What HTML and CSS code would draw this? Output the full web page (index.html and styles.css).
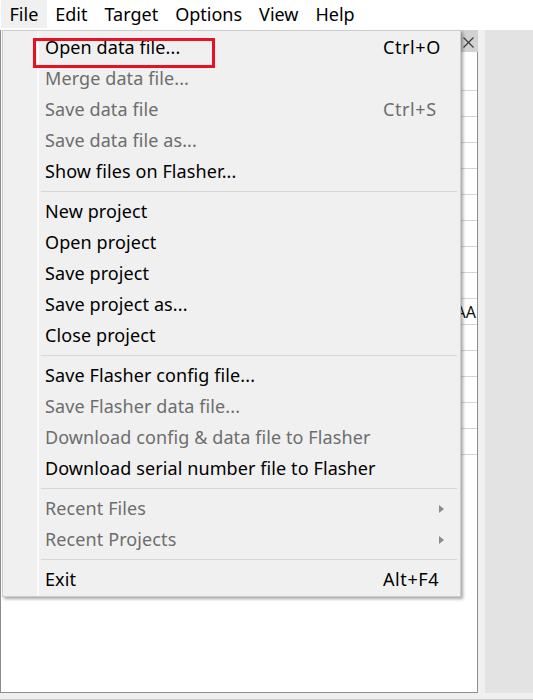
FILE: index.html
```html
<!DOCTYPE html>
<html>
<head>
<meta charset="utf-8">
<link rel="stylesheet" href="styles.css">
</head>
<body>
<div class="screen">
  <div class="menubar">
    <span class="mb-item active">File</span>
    <span class="mb-item">Edit</span>
    <span class="mb-item">Target</span>
    <span class="mb-item">Options</span>
    <span class="mb-item">View</span>
    <span class="mb-item">Help</span>
  </div>
  <div class="workspace">
    <div class="panel">
      <div class="panel-main"></div>
      <div class="panel-col">
        <div class="close">
          <svg width="16" height="22" viewBox="0 0 16 22"><path d="M2.5 7.5 L12.5 17.5 M12.5 7.5 L2.5 17.5" stroke="#3a3a3a" stroke-width="1.2" fill="none"/></svg>
        </div>
        <div class="col-head"></div>
        <div class="rows">
          <div class="cell"></div><div class="cell"></div><div class="cell"></div><div class="cell"></div>
          <div class="cell"></div><div class="cell"></div><div class="cell"></div><div class="cell"></div>
          <div class="cell"><span class="cell-text">AA</span></div>
          <div class="cell"></div><div class="cell"></div><div class="cell"></div><div class="cell"></div>
          <div class="cell"></div>
        </div>
      </div>
    </div>
    <div class="gap"></div>
    <div class="side"></div>
  </div>
  <div class="statusbar"></div>

  <div class="popup">
    <div class="item"><span class="label">Open data file...</span><span class="key">Ctrl+O</span></div>
    <div class="item disabled"><span class="label">Merge data file...</span><span class="key"></span></div>
    <div class="item disabled"><span class="label">Save data file</span><span class="key">Ctrl+S</span></div>
    <div class="item disabled"><span class="label">Save data file as...</span><span class="key"></span></div>
    <div class="item"><span class="label">Show files on Flasher...</span><span class="key"></span></div>
    <div class="sep"></div>
    <div class="item"><span class="label">New project</span><span class="key"></span></div>
    <div class="item"><span class="label">Open project</span><span class="key"></span></div>
    <div class="item"><span class="label">Save project</span><span class="key"></span></div>
    <div class="item"><span class="label">Save project as...</span><span class="key"></span></div>
    <div class="item"><span class="label">Close project</span><span class="key"></span></div>
    <div class="sep"></div>
    <div class="item"><span class="label">Save Flasher config file...</span><span class="key"></span></div>
    <div class="item disabled"><span class="label">Save Flasher data file...</span><span class="key"></span></div>
    <div class="item disabled"><span class="label">Download config &amp; data file to Flasher</span><span class="key"></span></div>
    <div class="item"><span class="label">Download serial number file to Flasher</span><span class="key"></span></div>
    <div class="sep"></div>
    <div class="item disabled"><span class="label">Recent Files</span><span class="key"><span class="arrow"></span></span></div>
    <div class="item disabled"><span class="label">Recent Projects</span><span class="key"><span class="arrow"></span></span></div>
    <div class="sep"></div>
    <div class="item"><span class="label">Exit</span><span class="key">Alt+F4</span></div>
  </div>
  <div class="highlight"></div>
</div>
</body>
</html>
```

FILE: styles.css
```css
html, body {
  margin: 0;
  padding: 0;
  background: #ffffff;
}
.screen {
  position: relative;
  width: 533px;
  height: 700px;
  overflow: hidden;
  font-family: "Noto Sans", "Open Sans", sans-serif;
  font-size: 18px;
  color: #000;
}
.menubar {
  height: 30px;
  display: flex;
  align-items: flex-start;
  padding-left: 1px;
  background: #ffffff;
}
.mb-item {
  height: 28px;
  line-height: 28px;
  padding: 0 8.5px;
  white-space: nowrap;
}
.mb-item.active {
  background: #f0f0f0;
}
.workspace {
  display: flex;
  height: 663px;
}
.panel {
  width: 478px;
  box-sizing: border-box;
  border: 1px solid #8a8d93;
  border-top: none;
  background: #fff;
  display: flex;
}
.panel-main {
  flex: 1;
}
.panel-col {
  width: 16px;
  display: flex;
  flex-direction: column;
}
.close {
  height: 22px;
  width: 17px;
  background: #d2d2d2;
}
.close svg {
  display: block;
}
.col-head {
  height: 38px;
}
.rows {
  border-bottom: 1px solid #d6d6d6;
}
.cell {
  height: 26px;
  box-sizing: border-box;
  border-top: 1px solid #d6d6d6;
  display: flex;
  align-items: center;
  justify-content: flex-end;
  overflow: visible;
}
.cell-text {
  font-size: 16px;
  line-height: 24px;
  padding-right: 1px;
  white-space: nowrap;
  color: #101010;
}
.gap {
  width: 7px;
  background: #f0f0f0;
}
.side {
  flex: 1;
  background: #e3e3e3;
}
.statusbar {
  height: 7px;
  background: #f0f0f0;
  border-bottom: 1px solid #cfcfcf;
  box-sizing: border-box;
}
.popup {
  position: absolute;
  left: 2px;
  top: 30px;
  width: 459px;
  height: 567px;
  box-sizing: border-box;
  border: 1px solid #cccccc;
  padding: 1px 0;
  background-color: #f0f0f0;
  background-image: linear-gradient(to right, transparent 34px, #fbfbfb 34px, #fbfbfb 36px, transparent 36px);
  box-shadow: 2px 2px 3px rgba(0, 0, 0, 0.35);
  letter-spacing: 0.1px;
}
.item {
  height: 31px;
  line-height: 31px;
  display: flex;
  align-items: center;
  padding-left: 42px;
  white-space: nowrap;
}
.item .label {
  flex: 1;
}
.item .key {
  width: 77px;
  display: flex;
  align-items: center;
  letter-spacing: 0.6px;
}
.item.disabled {
  color: #6d6d6d;
}
.arrow {
  margin-left: 56px;
  width: 0;
  height: 0;
  border-left: 5px solid #8a8a8a;
  border-top: 4.5px solid transparent;
  border-bottom: 4.5px solid transparent;
}
.sep {
  height: 9px;
  margin: 0 3px 0 38px;
  position: relative;
}
.sep::after {
  content: "";
  position: absolute;
  left: 0;
  right: 0;
  top: 4px;
  height: 1px;
  background: #d7d7d7;
}
.highlight {
  position: absolute;
  left: 33px;
  top: 38px;
  width: 182px;
  height: 30px;
  box-sizing: border-box;
  border: 3px solid #e81123;
}
```
